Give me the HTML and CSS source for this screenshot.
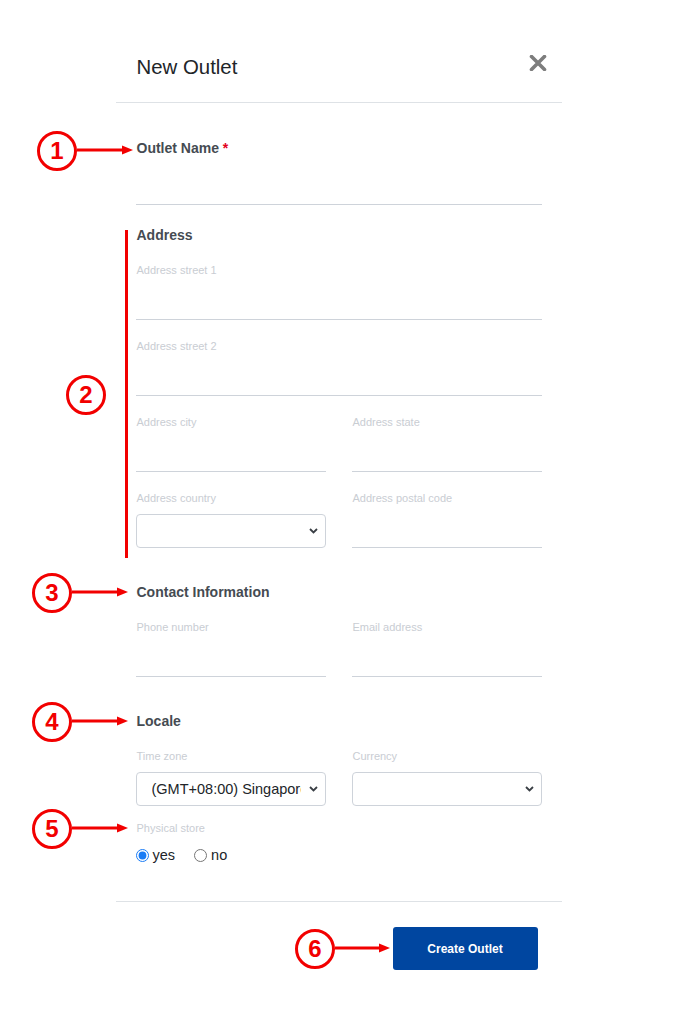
FILE: index.html
```html
<!DOCTYPE html>
<html lang="en">
<head>
<meta charset="utf-8">
<title>New Outlet</title>
<link rel="stylesheet" href="styles.css">
</head>
<body>
<div class="page">
  <div class="modal">
    <div class="modal-header">
      <h1 class="modal-title">New Outlet</h1>
      <button class="close" type="button" aria-label="Close">
        <svg width="18" height="16" viewBox="0 0 18 16"><path d="M2.5 1.5 L15.5 14.5 M15.5 1.5 L2.5 14.5" stroke="#7d7d7d" stroke-width="3.6" stroke-linecap="round"/></svg>
      </button>
    </div>

    <form class="modal-body">
      <div class="main-field">
        <label class="heading">Outlet Name <span class="req">*</span></label>
        <input class="line-input main-input" type="text">
      </div>

      <section class="section address">
        <span class="bracket"></span>
        <h2 class="heading">Address</h2>
        <div class="fields">
          <div class="field">
            <label class="field-label">Address street 1</label>
            <input class="line-input" type="text">
          </div>
          <div class="field">
            <label class="field-label">Address street 2</label>
            <input class="line-input" type="text">
          </div>
          <div class="row">
            <div class="field">
              <label class="field-label">Address city</label>
              <input class="line-input" type="text">
            </div>
            <div class="field">
              <label class="field-label">Address state</label>
              <input class="line-input" type="text">
            </div>
          </div>
          <div class="row">
            <div class="field">
              <label class="field-label">Address country</label>
              <div class="select-wrap">
                <select class="select"><option></option></select>
                <svg class="chevron" width="9" height="6" viewBox="0 0 9 6"><path d="M1 1 L4.5 4.5 L8 1" fill="none" stroke="#3a3f45" stroke-width="1.8"/></svg>
              </div>
            </div>
            <div class="field">
              <label class="field-label">Address postal code</label>
              <input class="line-input" type="text">
            </div>
          </div>
        </div>
      </section>

      <section class="section">
        <h2 class="heading">Contact Information</h2>
        <div class="row">
          <div class="field">
            <label class="field-label">Phone number</label>
            <input class="line-input" type="text">
          </div>
          <div class="field">
            <label class="field-label">Email address</label>
            <input class="line-input" type="text">
          </div>
        </div>
      </section>

      <section class="section">
        <h2 class="heading">Locale</h2>
        <div class="row">
          <div class="field">
            <label class="field-label">Time zone</label>
            <div class="select-wrap">
              <select class="select"><option>(GMT+08:00) Singapore</option></select>
              <svg class="chevron" width="9" height="6" viewBox="0 0 9 6"><path d="M1 1 L4.5 4.5 L8 1" fill="none" stroke="#3a3f45" stroke-width="1.8"/></svg>
            </div>
          </div>
          <div class="field">
            <label class="field-label">Currency</label>
            <div class="select-wrap">
              <select class="select"><option></option></select>
              <svg class="chevron" width="9" height="6" viewBox="0 0 9 6"><path d="M1 1 L4.5 4.5 L8 1" fill="none" stroke="#3a3f45" stroke-width="1.8"/></svg>
            </div>
          </div>
        </div>
        <div class="store-field">
          <label class="field-label">Physical store</label>
          <div class="radios">
            <label class="radio"><input type="radio" name="store" checked> yes</label>
            <label class="radio"><input type="radio" name="store"> no</label>
          </div>
        </div>
      </section>
    </form>

    <div class="modal-footer">
      <button class="btn-primary" type="button">Create Outlet</button>
    </div>
  </div>

  <div class="note note-1"><span class="badge">1</span><svg class="arrow" width="56" height="10" viewBox="0 0 56 10"><path d="M0 5 H46" stroke="#f20000" stroke-width="3"/><path d="M45 0.5 L56 5 L45 9.5 Z" fill="#f20000"/></svg></div>
  <div class="note note-2"><span class="badge">2</span></div>
  <div class="note note-3"><span class="badge">3</span><svg class="arrow" width="56" height="10" viewBox="0 0 56 10"><path d="M0 5 H46" stroke="#f20000" stroke-width="3"/><path d="M45 0.5 L56 5 L45 9.5 Z" fill="#f20000"/></svg></div>
  <div class="note note-4"><span class="badge">4</span><svg class="arrow" width="56" height="10" viewBox="0 0 56 10"><path d="M0 5 H46" stroke="#f20000" stroke-width="3"/><path d="M45 0.5 L56 5 L45 9.5 Z" fill="#f20000"/></svg></div>
  <div class="note note-5"><span class="badge">5</span><svg class="arrow" width="56" height="10" viewBox="0 0 56 10"><path d="M0 5 H46" stroke="#f20000" stroke-width="3"/><path d="M45 0.5 L56 5 L45 9.5 Z" fill="#f20000"/></svg></div>
  <div class="note note-6"><span class="badge">6</span><svg class="arrow" width="55" height="10" viewBox="0 0 55 10"><path d="M0 5 H45" stroke="#f20000" stroke-width="3"/><path d="M44 0.5 L55 5 L44 9.5 Z" fill="#f20000"/></svg></div>
</div>
</body>
</html>
```

FILE: styles.css
```css
* { box-sizing: border-box; }

html, body {
  margin: 0;
  padding: 0;
  background: #ffffff;
}

body {
  font-family: "Liberation Sans", Arial, Helvetica, sans-serif;
  color: #212529;
}

.page {
  position: relative;
  width: 677px;
  min-height: 1024px;
  padding-top: 32px;
}

.modal {
  width: 446px;
  margin: 0 auto;
}

.modal-header {
  height: 71px;
  display: flex;
  align-items: center;
  justify-content: space-between;
  padding: 0 15px 0 21px;
  border-bottom: 1px solid #dee2e6;
}

.modal-title {
  margin: 0;
  font-size: 20.4px;
  font-weight: 400;
  line-height: 24px;
  color: #212529;
}

.close {
  border: none;
  background: none;
  padding: 0;
  margin-top: -8px;
  width: 18px;
  height: 16px;
  display: flex;
  cursor: pointer;
}

.modal-body {
  padding: 37px 20px 38px;
  display: flex;
  flex-direction: column;
}

.heading {
  display: block;
  margin: 0 0 0 1px;
  font-size: 14px;
  font-weight: 700;
  line-height: 17px;
  color: #454b52;
}

.req { color: #e3001b; }

.main-field {
  display: flex;
  flex-direction: column;
}

.main-field .heading { margin-bottom: 8px; }

.line-input {
  display: block;
  width: 100%;
  height: 39px;
  border: none;
  border-bottom: 1px solid #ced3da;
  border-radius: 0;
  background: transparent;
  font: inherit;
  outline: none;
  padding: 0;
}

.main-input { height: 40px; }

.section {
  position: relative;
  margin-top: 36px;
}

.section.address { margin-top: 22px; }

.section .heading { margin-bottom: 19px; }

.bracket {
  position: absolute;
  left: -11px;
  top: 3px;
  bottom: -10px;
  width: 3px;
  background: #f20000;
}

.fields {
  display: flex;
  flex-direction: column;
  gap: 19px;
}

.row {
  display: grid;
  grid-template-columns: 1fr 1fr;
  column-gap: 26px;
}

.field {
  display: flex;
  flex-direction: column;
}

.field-label {
  display: block;
  font-size: 11px;
  line-height: 14px;
  color: #c9cdd3;
  margin: 0 0 4px 1px;
}

.select-wrap {
  position: relative;
  margin-top: 5px;
}

.select {
  display: block;
  width: 100%;
  height: 34px;
  appearance: none;
  -webkit-appearance: none;
  background: #ffffff;
  border: 1px solid #ced3da;
  border-radius: 4px;
  padding: 0 24px 0 15px;
  font-family: "Liberation Sans", Arial, sans-serif;
  font-size: 14.5px;
  color: #212529;
  outline: none;
}

.chevron {
  position: absolute;
  right: 8px;
  top: 14px;
  pointer-events: none;
}

.store-field {
  margin-top: 15px;
}

.radios {
  display: flex;
  align-items: center;
  gap: 19px;
  margin-top: 12px;
  height: 16px;
}

.radio {
  display: flex;
  align-items: center;
  gap: 4px;
  font-size: 14.5px;
  color: #212529;
}

.radio input {
  margin: 0;
  width: 13px;
  height: 13px;
  accent-color: #1a7cf5;
}

.modal-footer {
  border-top: 1px solid #dee2e6;
  display: flex;
  justify-content: flex-end;
  padding: 25px 24px 20px;
}

.btn-primary {
  width: 145px;
  height: 43px;
  border: none;
  border-radius: 3px;
  background: #0046a0;
  color: #ffffff;
  font-family: "Liberation Sans", Arial, sans-serif;
  font-size: 12px;
  font-weight: 700;
  cursor: pointer;
}

/* annotation overlays */
.note {
  position: absolute;
  display: flex;
  align-items: center;
}

.badge {
  width: 40px;
  height: 40px;
  border: 3px solid #f20000;
  border-radius: 50%;
  display: flex;
  align-items: center;
  justify-content: center;
  font-family: "Liberation Sans", Arial, sans-serif;
  font-size: 24px;
  font-weight: 700;
  color: #f20000;
  line-height: 1;
  background: #ffffff;
}

.arrow { display: block; margin-top: -2px; }

.note-1 { left: 37px; top: 131px; }
.note-2 { left: 66px; top: 375px; }
.note-3 { left: 32px; top: 573px; }
.note-4 { left: 32px; top: 702px; }
.note-5 { left: 32px; top: 809px; }
.note-6 { left: 295px; top: 929px; }
```
